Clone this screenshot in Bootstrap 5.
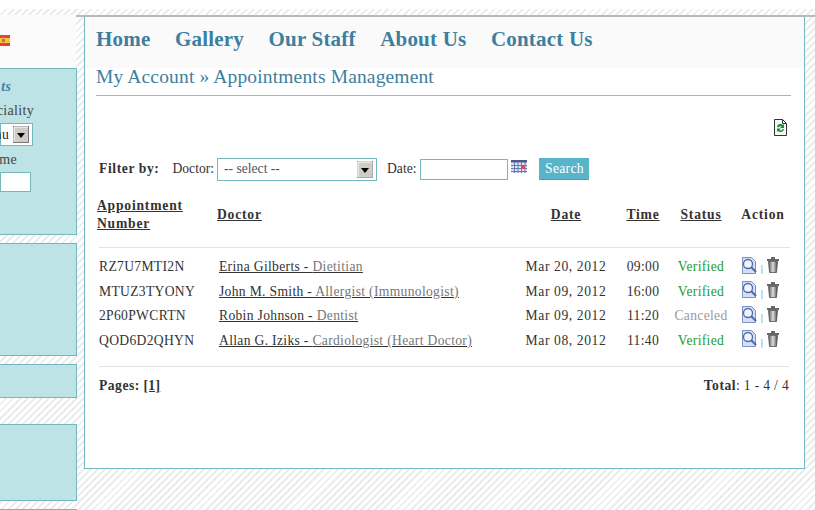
<!DOCTYPE html>
<html lang="en"><head><meta charset="utf-8"><title>Appointments Management</title>
<link href="https://cdn.jsdelivr.net/npm/bootstrap@5.3.0/dist/css/bootstrap.min.css" rel="stylesheet">
<style>
html,body{height:510px;overflow:hidden}
body{font-family:"Liberation Serif",serif;font-size:13.6px;letter-spacing:.32px;color:#333;line-height:18px;background:#fff repeating-linear-gradient(135deg,#ececec 0,#ececec 2px,#fff 2px,#fff 5px)}
.topband{height:9px;background:#fff}
.stage{padding-top:6px}
.sidecol{width:76px;flex:none}
.sidehead{height:53px;background:#fbfbfb;padding-top:20px}
.flag{display:block;width:10px;height:11px}
.sidebox{background:#bde3e6;border:1px solid #74b8bf;border-left:0;margin-top:8px;overflow:hidden;width:77px}
.b1{margin-top:0;height:167px;padding-top:9px}
.b2{height:113px}.b3{height:34px}.b4{height:77px;margin-top:26px}.b5{height:1px;border-width:1px 0 0}
.sr{width:34px;display:flex;justify-content:flex-end;white-space:nowrap}
.sr-short{width:17px}
.sidetitle{color:#3d7f9e;font-weight:700;font-style:italic;width:11px;margin-bottom:6px;margin-top:0}
.sidelabel{color:#444;font-size:14px;height:18px;margin-bottom:3px}
.selectfake{width:33px;height:23px;background:#fff;border:1px solid #74b8bf;display:flex;align-items:center;justify-content:flex-end;padding-right:3px;gap:4px;margin-bottom:5px;white-space:nowrap}
.selectfake>*{flex:none}
.inputfake{width:31px;height:20px;background:#fff;border:1px solid #74b8bf;margin-top:3px}
.mainwrap{flex:1;border-top:2px solid #b9b9b9;padding:0 10px 0 8px;min-width:0}
.panel{height:452px;background:#fff;border:1px solid #74b8bf;border-top:0}
.topnav{height:51px;background:#fafafa;padding:0 11px 8px;gap:24.5px;align-items:center}
.topnav a{font-size:21px;font-weight:700;color:#3d7f9e;text-decoration:none;letter-spacing:.2px;line-height:42px}
.acct-title{margin:0 13px 0 11px;height:27px;color:#3d7f9e;font-size:19.5px;font-weight:400;line-height:18px;letter-spacing:.15px}
.goldrule{height:1px;margin:0 13px 0 11px;background-color:#c8ba3c}
.toolrow{height:59px;padding:23px 16px 0 0}
.filters{padding-left:14px;margin-top:2px;height:24px;color:#333}
.filters b{letter-spacing:.6px;margin-right:13px}
.filters label{letter-spacing:0}
.filters select{width:160px;height:23px;border:1px solid #74b8bf;border-radius:0;padding:0 0 0 6px;font:inherit;color:#555;appearance:none;margin:0 10px 0 3px;background:#fff url("data:image/svg+xml,%3Csvg xmlns='http://www.w3.org/2000/svg' width='16' height='17'%3E%3Crect width='16' height='17' fill='%23cfccc6' stroke='%23888'/%3E%3Cpath d='M1 16V1h14' fill='none' stroke='%23fff'/%3E%3Cpath d='M4 7h8l-4 5z' fill='%23000'/%3E%3C/svg%3E") no-repeat right 3px center}
.filters input{width:88px;height:21px;border:1px solid #74b8bf;padding:0;margin:0 3px 0 4px}
.calicon{margin-bottom:6px}
.searchbtn{background:#5ab4c9;color:#fff;border:0;border-radius:0;height:22px;width:50px;padding:0;font:inherit;letter-spacing:.32px;margin-left:12px;box-shadow:inset 0 -1px #4b9fb3}
.apptable{table-layout:fixed;width:691px;margin:9px 0 0 14px;--bs-table-bg:transparent;color:#333}
.apptable th,.apptable td{padding:0;border:0;vertical-align:middle;background:transparent;color:#333;box-shadow:none}
.apptable thead th{height:57px;padding-bottom:7px;font-weight:700;line-height:18px;letter-spacing:.8px}
.apptable a{color:#333}
.firsthead{display:inline-block;margin-left:-2px}
.apptable tbody td{height:24.5px}
.apptable thead tr{border-bottom:1px solid #e2e2e2}
.apptable tbody tr:first-child td{height:32.5px;padding-top:7.5px}
.doc{padding-left:2px!important}
.doc a{color:#333;white-space:nowrap}
.doc span{color:#777}
.datecell{letter-spacing:.6px}
.ok{color:#1d9a2a!important}.no{color:#999!important}
.actionhead{padding-left:5px!important}
.foot{margin:13px 3px 0 14px;border-top:1px solid #e2e2e2;padding-top:10px;width:690px}
.foot b{letter-spacing:.5px}
.sep{color:#777;margin:0 3px;font-size:11px;line-height:12px;padding-top:2px}
.acts{display:flex;align-items:center}
.acts svg{margin-bottom:4px;flex:none}
</style></head><body>
<div class="topband"></div>
<div class="stage d-flex">
 <aside class="sidecol">
  <div class="sidehead"><svg class="flag" viewBox="0 0 10 11"><rect width="10" height="11" fill="#e8403a"/><rect y="3" width="10" height="5" fill="#f5c542"/><rect x="2" y="4" width="3" height="3" fill="#c9763a"/></svg></div>
  <div class="sidebox b1">
   <div class="sr sidetitle">ts</div>
   <div class="sr sidelabel">Speciality</div>
   <div class="selectfake"><span class="text-dark">Menu</span><svg width="16" height="17" viewBox="0 0 16 17"><rect x=".5" y=".5" width="15" height="16" fill="#cfccc6" stroke="#777"/><path d="M1 16V1h14" fill="none" stroke="#fff"/><path d="M4 7h8l-4 5z" fill="#000"/></svg></div>
   <div class="sr sr-short sidelabel mt-1">Time</div>
   <div class="inputfake"></div>
  </div>
  <div class="sidebox b2"></div>
  <div class="sidebox b3"></div>
  <div class="sidebox b4"></div>
  <div class="sidebox b5"></div>
 </aside>
 <main class="mainwrap">
  <div class="panel">
   <nav class="topnav d-flex"><a href="#">Home</a><a href="#">Gallery</a><a href="#">Our Staff</a><a href="#">About Us</a><a href="#">Contact Us</a></nav>
   <h1 class="acct-title">My Account » Appointments Management</h1>
   <div class="goldrule"></div>
   <div class="toolrow d-flex justify-content-end">
    <svg width="15" height="17" viewBox="0 0 15 17"><path d="M1.500.5h8l4 4v12h-12z" fill="#f4fbf0" stroke="#333"/><path d="M9.500.5v4h4" fill="none" stroke="#333"/><path d="M4 8a3.500 3.500 0 0 1 6-2l1-1v4H7l1.500-1.300A2 2 0 0 0 5.500 8.500zM11 10a3.500 3.500 0 0 1-6 2l-1 1V9.500h4L6.500 11a2 2 0 0 0 3-1z" fill="#1f8a3a"/></svg>
   </div>
   <form class="filters d-flex align-items-center">
    <b>Filter by:</b><label>Doctor:</label>
    <select><option>-- select --</option></select>
    <label>Date:</label><input type="text">
    <svg class="calicon" width="16" height="13" viewBox="0 0 16 13"><rect width="16" height="13" fill="#dfe4f5"/><rect width="16" height="2.500" fill="#4a5a8a"/><path d="M0 5.500h16M0 8.500h16M0 11.500h16M3.500 2v11M7 2v11M10.500 2v11M14 2v11" stroke="#6a78b0"/><rect x="10.500" y="6" width="3.500" height="3" fill="#d84a5a"/></svg>
    <button type="button" class="btn searchbtn">Search</button>
   </form>
   <table class="table apptable mb-0">
    <colgroup><col style="width:118px"><col style="width:300px"><col style="width:98px"><col style="width:56px"><col style="width:60px"><col></colgroup>
    <thead><tr><th><a href="#" class="firsthead">Appointment Number</a></th><th><a href="#">Doctor</a></th><th class="text-center"><a href="#">Date</a></th><th class="text-center"><a href="#">Time</a></th><th class="text-center"><a href="#">Status</a></th><th class="text-center actionhead">Action</th></tr></thead>
    <tbody id="rows"></tbody>
   </table>
   <div class="foot d-flex justify-content-between"><div><b>Pages:</b> <a href="#" class="fw-bold text-reset">[1]</a></div><div><b>Total</b>: 1 - 4 / 4</div></div>
  </div>
 </main>
</div>
<script>
const data=[["RZ7U7MTI2N","Erina Gilberts","Dietitian","Mar 20, 2012","09:00","Verified"],["MTUZ3TYONY","John M. Smith","Allergist (Immunologist)","Mar 09, 2012","16:00","Verified"],["2P60PWCRTN","Robin Johnson","Dentist","Mar 09, 2012","11:20","Canceled"],["QOD6D2QHYN","Allan G. Iziks","Cardiologist (Heart Doctor)","Mar 08, 2012","11:40","Verified"]];
const view='<svg width="17" height="17" viewBox="0 0 17 17"><path d="M1.500.5h9l4 4v12h-13z" fill="#d6e0f5" stroke="#7c8fc2"/><circle cx="7" cy="7" r="4.500" fill="#eef5ff" stroke="#4f6aa8" stroke-width="1.300"/><path d="M10 10l5 5" stroke="#4f6aa8" stroke-width="2"/></svg>';
const bin='<svg width="14" height="16" viewBox="0 0 14 16"><defs><linearGradient id="g"><stop offset="0" stop-color="#555"/><stop offset=".5" stop-color="#ddd"/><stop offset="1" stop-color="#444"/></linearGradient></defs><path d="M5 1h4" stroke="#333" stroke-width="1.500"/><path d="M1 3h12" stroke="#333" stroke-width="1.500"/><path d="M2.500 4.500h9l-1 11h-7z" fill="url(#g)" stroke="#444" stroke-width=".7"/></svg>';
document.getElementById('rows').innerHTML=data.map(r=>`<tr><td>${r[0]}</td><td class="doc"><a href="#">${r[1]} - <span>${r[2]}</span></a></td><td class="text-center datecell">${r[3]}</td><td class="text-center">${r[4]}</td><td class="text-center ${r[5]=='Verified'?'ok':'no'}">${r[5]}</td><td><div class="acts justify-content-center">${view}<span class="sep">|</span>${bin}</div></td></tr>`).join('');
</script>
</body></html>
